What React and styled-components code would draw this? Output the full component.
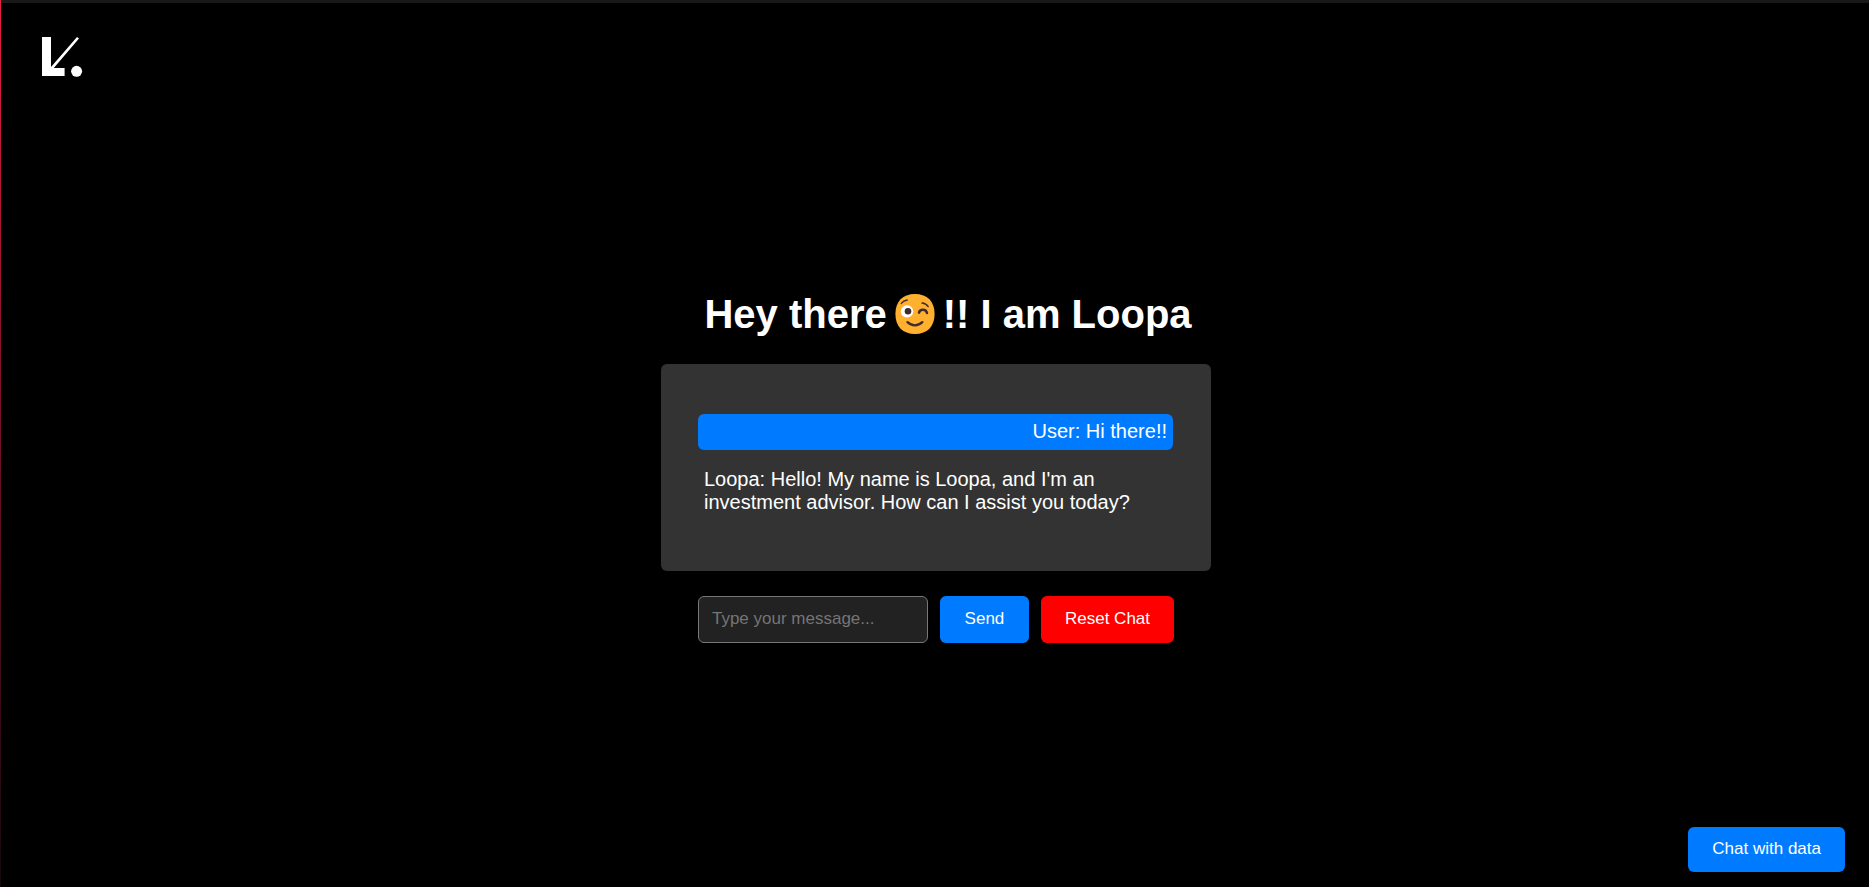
import React, { useState } from "react";
import styled, { createGlobalStyle, css } from "styled-components";

const GlobalStyle = createGlobalStyle`
  *, *::before, *::after { box-sizing: border-box; }
  body {
    margin: 0;
    background: #000;
    color: #fff;
    font-family: "Liberation Sans", Arial, sans-serif;
  }
`;

const Page = styled.div`
  display: grid;
  grid-template-columns: 1px 1fr;
  grid-template-rows: 3px 1fr;
  min-height: 100vh;
`;

const AccentLine = styled.div`
  grid-row: 1 / -1;
  background: linear-gradient(#ec1c40, #7c1028 45%, #14080c);
`;

const TopLine = styled.div`
  background: #181818;
`;

const Content = styled.div`
  grid-column: 2;
  display: flex;
  flex-direction: column;
`;

const Header = styled.header`
  padding: 33px 40px 0;
`;

const HomeLink = styled.a`
  display: inline-block;
  vertical-align: top;
  svg { display: block; }
`;

const Main = styled.main`
  flex: 1;
  display: flex;
  flex-direction: column;
  align-items: center;
  justify-content: center;
  padding: 29px 14px 0 16px;
`;

const Title = styled.h1`
  display: flex;
  align-items: center;
  gap: 8px;
  margin: 0 0 27px;
  padding-left: 24px;
  font-size: 40px;
  line-height: 46px;
`;

const ChatLog = styled.section`
  width: 100%;
  max-width: 550px;
  min-height: 207px;
  padding: 50px 38px 50px 37px;
  display: flex;
  flex-direction: column;
  gap: 12px;
  background: #333;
  border-radius: 6px;
`;

const Message = styled.p`
  margin: 0;
  padding: 6px 6px 7px;
  border-radius: 6px;
  font-size: 20px;
  line-height: 23px;
  ${({ $own }) => $own && css`
    background: #007bff;
    text-align: right;
  `}
`;

const Composer = styled.form`
  display: flex;
  flex-wrap: wrap;
  justify-content: center;
  gap: 12px;
  margin-top: 25px;
`;

const MessageInput = styled.input`
  width: 230px;
  padding: 12px 13px 14px;
  border: 1px solid #777;
  border-radius: 6px;
  background: #222;
  color: #fff;
  font: 17px/19px "Liberation Sans", Arial, sans-serif;
  &::placeholder { color: #757575; opacity: 1; }
`;

const Button = styled.button`
  min-width: 89px;
  padding: 12px 24px 14px;
  border: 0;
  border-radius: 6px;
  background: ${({ $danger }) => ($danger ? "#f00" : "#007bff")};
  color: #fff;
  font: 17px/19px "Liberation Sans", Arial, sans-serif;
  cursor: pointer;
`;

const Footer = styled.footer`
  display: flex;
  justify-content: flex-end;
  padding: 0 24px 15px;
`;

function Logo() {
  return (
    <svg width="43" height="42" viewBox="0 0 43 42" fill="#fff" aria-hidden="true">
      <path d="M1 1H10V31L36 1L38 2.6L12.8 32H23.6V40H1Z" />
      <circle cx="35.6" cy="35.3" r="5.5" />
    </svg>
  );
}

function WinkingFace() {
  return (
    <svg width="40" height="40" viewBox="0 0 40 40" fill="none" role="img" aria-label="winking face">
      <path d="M20 0C32.4 0 39.6 7.6 39.6 20S32.4 40 20 40S0.4 32.4 0.4 20S7.6 0 20 0Z" fill="#ffb02e" />
      <circle cx="12" cy="17.4" r="6.2" fill="#fff" />
      <circle cx="13" cy="17.2" r="3.3" fill="#402a32" />
      <g stroke="#402a32" strokeLinecap="round">
        <path d="M6.3 9.4C7.8 7.4 9.8 6.3 12.2 6" strokeWidth="1.4" />
        <path d="M27 9C29.6 9.2 31.7 10.3 33.2 12.6" strokeWidth="1.4" />
        <path d="M24 18.6C25 14.8 31 14.8 32 19" strokeWidth="2.5" />
        <path d="M12.5 28.2C16.8 32.4 23 32.4 27.3 28.2" strokeWidth="2.4" />
      </g>
    </svg>
  );
}

const greeting = [
  { author: "User", text: "Hi there!!" },
  {
    author: "Loopa",
    text: "Hello! My name is Loopa, and I'm an investment advisor. How can I assist you today?",
  },
];

export default function App() {
  const [messages, setMessages] = useState(greeting);
  const [draft, setDraft] = useState("");

  const send = (event) => {
    event.preventDefault();
    if (!draft.trim()) return;
    setMessages([...messages, { author: "User", text: draft }]);
    setDraft("");
  };

  return (
    <>
      <GlobalStyle />
      <Page>
        <AccentLine />
        <TopLine />
        <Content>
          <Header>
            <HomeLink href="#" aria-label="Home"><Logo /></HomeLink>
          </Header>
          <Main>
            <Title>
              <span>Hey there</span>
              <WinkingFace />
              <span>!! I am Loopa</span>
            </Title>
            <ChatLog aria-live="polite">
              {messages.map(({ author, text }, i) => (
                <Message key={i} $own={author === "User"}>{`${author}: ${text}`}</Message>
              ))}
            </ChatLog>
            <Composer onSubmit={send}>
              <MessageInput
                type="text"
                aria-label="Message"
                placeholder="Type your message..."
                value={draft}
                onChange={(event) => setDraft(event.target.value)}
              />
              <Button type="submit">Send</Button>
              <Button type="button" $danger onClick={() => setMessages([])}>Reset Chat</Button>
            </Composer>
          </Main>
          <Footer>
            <Button type="button">Chat with data</Button>
          </Footer>
        </Content>
      </Page>
    </>
  );
}
